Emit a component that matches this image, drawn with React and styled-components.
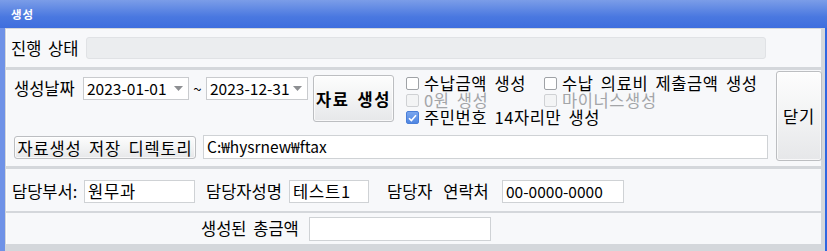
import React from 'react';
import styled, { createGlobalStyle } from 'styled-components';

const GlobalStyle = createGlobalStyle`
  html, body {
    margin: 0;
    padding: 0;
    background: #d4d7db;
  }
  body {
    font-family: "Noto Sans CJK KR", "Noto Sans", sans-serif;
    color: #000;
  }
`;

const Window = styled.div`
  width: 827px;
  height: 251px;
  display: flex;
  flex-direction: column;
  overflow: hidden;
  background: #d4d7db;
`;

const TitleBar = styled.div`
  height: 28px;
  flex: none;
  display: flex;
  align-items: center;
  padding-left: 11px;
  background: linear-gradient(#7b9de8, #4a78e0 60%, #3e6ede);
  color: #fff;
  font-size: 11.5px;
  font-weight: 700;
  letter-spacing: 1px;
`;

const Body = styled.div`
  flex: 1;
  display: flex;
  flex-direction: column;
  padding: 1px 4px 0 1px;
  border-left: 5px solid #6f92e7;
  border-right: 2px solid #2f66e0;
  background: #d4d7db;
`;

const Panel = styled.div`
  height: ${p => p.$h}px;
  flex: none;
  box-sizing: border-box;
  margin-bottom: ${p => p.$mb || 0}px;
  padding: ${p => p.$pad || '0'};
  display: flex;
  align-items: ${p => p.$align || 'flex-start'};
  background: #f7f8fa;
  border-left: 1px solid #fdfdfe;
  font-size: 16.5px;
  word-spacing: 3px;
`;

const Label = styled.span`
  width: ${p => p.$w}px;
  flex: none;
  white-space: nowrap;
  line-height: 23px;
  margin-left: ${p => p.$ml || 0}px;
  margin-top: ${p => p.$mt || 0}px;
  word-spacing: ${p => p.$ws ?? 3}px;
`;

const Progress = styled.div`
  width: 680px;
  height: 22px;
  box-sizing: border-box;
  border: 1px solid #e0e2e5;
  border-radius: 3px;
  background: #ebedef;
`;

const Field = styled.div`
  width: ${p => p.$w}px;
  height: ${p => p.$h || 23}px;
  flex: none;
  box-sizing: border-box;
  margin-left: ${p => p.$ml || 0}px;
  margin-top: ${p => p.$mt || 0}px;
  padding-left: 3px;
  border: 1px solid #cfd2d5;
  background: #fff;
  line-height: 21px;
  white-space: nowrap;
  font-size: ${p => p.$num ? 15.5 : 16.5}px;
  letter-spacing: ${p => p.$num ? 0 : 0.8}px;
  word-spacing: 0;
  overflow: hidden;
`;

const Combo = styled(Field)`
  display: flex;
  align-items: center;
  justify-content: space-between;
  padding-right: 5px;
  border-color: #c9cbce;
`;

const ComboArrow = styled.svg`
  width: 9px;
  height: 5px;
  flex: none;
`;

const Tilde = styled.span`
  width: 17px;
  flex: none;
  text-align: center;
  line-height: 23px;
  margin-top: 2px;
  font-size: 15px;
`;

const Button = styled.div`
  width: ${p => p.$w}px;
  height: ${p => p.$h}px;
  flex: none;
  box-sizing: border-box;
  display: flex;
  align-items: center;
  justify-content: center;
  margin-left: ${p => p.$ml || 0}px;
  margin-top: ${p => p.$mt || 0}px;
  border: 1px solid #bcbec1;
  border-radius: 3px;
  background: linear-gradient(#fdfdfd, #f1f2f3 55%, #e6e7e9);
  box-shadow: inset 0 0 0 1px rgba(255, 255, 255, 0.7);
  font-weight: ${p => p.$bold ? 700 : 400};
  letter-spacing: ${p => p.$bold ? 1.5 : 0.8}px;
  white-space: nowrap;
`;

const Main = styled.div`
  width: 761px;
  flex: none;
  box-sizing: border-box;
  padding: 5px 0 0 7px;
  display: flex;
  flex-direction: column;
  gap: 9px;
`;

const Row = styled.div`
  display: flex;
  align-items: flex-start;
`;

const Checks = styled.div`
  margin-left: 12px;
  display: grid;
  grid-template-columns: 138px auto;
  grid-auto-rows: 17px;
`;

const CheckItem = styled.div`
  display: flex;
  align-items: center;
  gap: 5px;
  height: 17px;
  line-height: 17px;
  white-space: nowrap;
  letter-spacing: 0.6px;
  color: ${p => p.$disabled ? '#a3a5a8' : '#000'};
  grid-column: ${p => p.$span ? '1 / span 2' : 'auto'};
`;

const Box = styled.span`
  width: 13px;
  height: 13px;
  flex: none;
  box-sizing: border-box;
  display: flex;
  align-items: center;
  justify-content: center;
  border-radius: 2px;
  border: 1px solid ${p => p.$checked ? '#4a7fd8' : p.$disabled ? '#cfd1d4' : '#9fa2a6'};
  background: ${p => p.$checked
    ? 'linear-gradient(#7aa6ee, #4f86e2)'
    : p.$disabled ? '#f3f4f5' : '#fff'};
`;

const Check = ({ label, checked, disabled, span }) => (
  <CheckItem $disabled={disabled} $span={span}>
    <Box $checked={checked} $disabled={disabled}>
      {checked && (
        <svg width="9" height="8" viewBox="0 0 9 8">
          <path d="M1 4.2 L3.4 6.6 L8 1.2" fill="none" stroke="#fff" strokeWidth="1.6" />
        </svg>
      )}
    </Box>
    {label}
  </CheckItem>
);

const DateCombo = ({ value, w }) => (
  <Combo $w={w} $mt={2} $num>
    {value}
    <ComboArrow viewBox="0 0 9 5">
      <path d="M0 0 H9 L4.5 5 Z" fill="#8d8f92" />
    </ComboArrow>
  </Combo>
);

export default function App() {
  return (
    <>
      <GlobalStyle />
      <Window>
        <TitleBar>생성</TitleBar>
        <Body>
          <Panel $h={38} $mb={3} $pad="0 0 0 4px" $align="center">
            <Label $w={75} $ws={3}>진행 상태</Label>
            <Progress />
          </Panel>

          <Panel $h={96} $mb={3}>
            <Main>
              <Row>
                <Label $w={69} $mt={2}>생성날짜</Label>
                <DateCombo value="2023-01-01" w={106} />
                <Tilde>~</Tilde>
                <DateCombo value="2023-12-31" w={102} />
                <Button $w={81} $h={47} $ml={5} $bold>자료 생성</Button>
                <Checks>
                  <Check label="수납금액 생성" />
                  <Check label="수납 의료비 제출금액 생성" />
                  <Check label="0원 생성" disabled />
                  <Check label="마이너스생성" disabled />
                  <Check label="주민번호 14자리만 생성" checked span />
                </Checks>
              </Row>
              <Row>
                <Button $w={182} $h={23} $mt={1}>자료생성 저장 디렉토리</Button>
                <Field $w={565} $h={24} $ml={7} $num>C:₩hysrnew₩ftax</Field>
              </Row>
            </Main>
            <Button $w={46} $h={90} $ml={8} $mt={1}>닫기</Button>
          </Panel>

          <Panel $h={42} $mb={2} $pad="11px 0 0 5px">
            <Label $w={72}>담당부서:</Label>
            <Field $w={111}>원무과</Field>
            <Label $w={83} $ml={11}>담당자성명</Label>
            <Field $w={80}>테스트1</Field>
            <Label $w={115} $ml={18} $ws={7}>담당자 연락처</Label>
            <Field $w={122} $num>00-0000-0000</Field>
          </Panel>

          <Panel $h={31} $pad="4px 0 0 194px">
            <Label $w={108}>생성된 총금액</Label>
            <Field $w={182} $h={24} />
          </Panel>
        </Body>
      </Window>
    </>
  );
}
